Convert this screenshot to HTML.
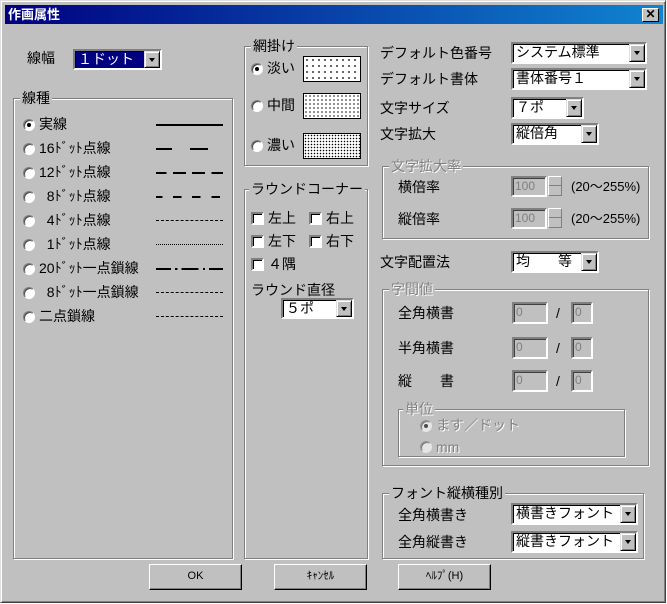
<!DOCTYPE html><html><head><meta charset="utf-8"><style>
*{box-sizing:border-box;margin:0;padding:0}
body{width:667px;height:604px;background:#fff;font-family:"Liberation Sans","Noto Sans CJK JP",sans-serif;font-size:14px;color:#000;position:relative;overflow:hidden}
.win{position:absolute;left:0;top:0;width:666px;height:603px;background:#c0c0c0;border:1px solid;border-color:#dfdfdf #404040 #404040 #dfdfdf;box-shadow:inset 1px 1px #fff,inset -1px -1px #808080}
.a{position:absolute;white-space:nowrap;line-height:18px}
.title{position:absolute;left:4px;top:4px;width:658px;height:19px;background:linear-gradient(90deg,#000080,#1084d0);color:#fff;font-weight:bold;font-size:13px;line-height:19px;padding-left:3px}
.xb{position:absolute;left:641px;top:7px;width:17px;height:14px;background:#c0c0c0;border:1px solid;border-color:#fff #000 #000 #fff;font-size:12px;line-height:11px;text-align:center;font-weight:bold;color:#000}
.g{position:absolute;border:1px solid #808080;box-shadow:1px 1px #fff,inset 1px 1px #fff}
.gl{position:absolute;top:-10px;left:6px;background:#c0c0c0;padding:0 2px;font-size:14px;line-height:18px}
.dis{color:#808080;text-shadow:1px 1px #fff}
.cb{position:absolute;background:#fff;border:2px solid;border-color:#808080 #fff #fff #808080;box-shadow:inset 1px 1px #000;padding-left:3px;line-height:17px;font-size:14px}
.cb .ar{position:absolute;right:0;top:0;width:16px;height:100%;background:#c0c0c0;border:1px solid;border-color:#dfdfdf #000 #000 #dfdfdf;box-shadow:inset 1px 1px #fff,inset -1px -1px #808080}
.cb .ar:after{content:"";position:absolute;left:4px;top:6px;border:3px solid transparent;border-top:4px solid #000;border-bottom:0}
.rd{position:absolute;width:12px;height:12px;border-radius:50%;background:#fff;border:1px solid;border-color:#808080 #fff #fff #808080;box-shadow:inset 1px 1px #404040}
.rd.on:after{content:"";position:absolute;left:3px;top:3px;width:4px;height:4px;border-radius:50%;background:#000}
.ck{position:absolute;width:13px;height:13px;background:#fff;border:2px solid;border-color:#808080 #fff #fff #808080;box-shadow:inset 1px 1px #000}
.ln{position:absolute;left:155px;width:67px;height:0;border-top:2px solid #000}
.pat{position:absolute;left:302px;width:58px;height:26px;border:1px solid #000;background:#fff}
.ed{position:absolute;background:#c0c0c0;border:2px solid;border-color:#808080 #fff #fff #808080;box-shadow:inset 1px 1px #404040;color:#808080;font-size:12px;line-height:16px;padding-left:2px}
.btn{position:absolute;top:563px;width:93px;height:26px;background:#c0c0c0;border:1px solid;border-color:#fff #000 #000 #fff;box-shadow:inset -1px -1px #808080;text-align:center;line-height:23px;font-size:11px}
.sp{position:absolute;width:14px;height:20px;background:#c0c0c0;border:1px solid;border-color:#fff #808080 #808080 #fff}
.sp:before{content:"";position:absolute;left:0;right:0;top:8px;border-top:1px solid #808080}
</style></head><body><div class="win">
<div class="title">作画属性</div><div class="xb">✕</div>

<div class="a" style="left:26px;top:48px">線幅</div>
<div class="cb" style="left:72px;top:48px;width:89px;height:21px;background:#000080;color:#fff">１ドット<span class="ar"></span></div>

<div class="g" style="left:12px;top:97px;width:220px;height:461px"><span class="gl">線種</span></div>
<div class="rd on" style="left:22px;top:118px"></div><div class="a" style="left:38px;top:114px">実線</div><div class="ln" style="top:123px"></div>
<div class="rd" style="left:22px;top:142px"></div><div class="a" style="left:38px;top:138px">16ﾄﾞｯﾄ点線</div><div class="ln" style="top:147px;border-top-style:dashed;border-image:repeating-linear-gradient(90deg,#000 0 17px,transparent 17px 34px) 2"></div>
<div class="rd" style="left:22px;top:166px"></div><div class="a" style="left:38px;top:162px">12ﾄﾞｯﾄ点線</div><div class="ln" style="top:171px;border-top-style:dashed;border-image:repeating-linear-gradient(90deg,#000 0 12px,transparent 12px 18px) 2"></div>
<div class="rd" style="left:22px;top:190px"></div><div class="a" style="left:38px;top:186px">&nbsp;&nbsp;8ﾄﾞｯﾄ点線</div><div class="ln" style="top:195px;border-top-style:dashed;border-image:repeating-linear-gradient(90deg,#000 0 8px,transparent 8px 18px) 2"></div>
<div class="rd" style="left:22px;top:214px"></div><div class="a" style="left:38px;top:210px">&nbsp;&nbsp;4ﾄﾞｯﾄ点線</div><div class="ln" style="top:219px;border-top:1px dashed #000"></div>
<div class="rd" style="left:22px;top:238px"></div><div class="a" style="left:38px;top:234px">&nbsp;&nbsp;1ﾄﾞｯﾄ点線</div><div class="ln" style="top:243px;border-top:1px dotted #000"></div>
<div class="rd" style="left:22px;top:262px"></div><div class="a" style="left:38px;top:258px">20ﾄﾞｯﾄ一点鎖線</div><div class="ln" style="top:267px;border-top-style:dashed;border-image:repeating-linear-gradient(90deg,#000 0 16px,transparent 16px 20px,#000 20px 22px,transparent 22px 26px) 2"></div>
<div class="rd" style="left:22px;top:286px"></div><div class="a" style="left:38px;top:282px">&nbsp;&nbsp;8ﾄﾞｯﾄ一点鎖線</div><div class="ln" style="top:291px;border-top:1px dashed #000"></div>
<div class="rd" style="left:22px;top:310px"></div><div class="a" style="left:38px;top:306px">二点鎖線</div><div class="ln" style="top:315px;border-top:1px dashed #000"></div>

<div class="g" style="left:243px;top:45px;width:124px;height:120px"><span class="gl">網掛け</span></div>
<div class="rd on" style="left:250px;top:62px"></div><div class="a" style="left:266px;top:58px">淡い</div>
<div class="pat" style="top:55px;background:radial-gradient(#000 0.7px,transparent 1px) 0 0/6px 6px #fff"></div>
<div class="rd" style="left:250px;top:99px"></div><div class="a" style="left:266px;top:95px">中間</div>
<div class="pat" style="top:92px;background:radial-gradient(#000 0.6px,transparent 0.9px) 0 0/4px 4px #fff"></div>
<div class="rd" style="left:250px;top:139px"></div><div class="a" style="left:266px;top:135px">濃い</div>
<div class="pat" style="top:132px;background:radial-gradient(#000 0.6px,transparent 0.9px) 0 0/3px 3px #fff"></div>

<div class="g" style="left:243px;top:188px;width:124px;height:370px"><span class="gl" style="left:4px">ラウンドコーナー</span></div>
<div class="ck" style="left:250px;top:211px"></div><div class="a" style="left:267px;top:208px">左上</div>
<div class="ck" style="left:308px;top:211px"></div><div class="a" style="left:325px;top:208px">右上</div>
<div class="ck" style="left:250px;top:234px"></div><div class="a" style="left:267px;top:231px">左下</div>
<div class="ck" style="left:308px;top:234px"></div><div class="a" style="left:325px;top:231px">右下</div>
<div class="ck" style="left:250px;top:257px"></div><div class="a" style="left:267px;top:254px">４隅</div>
<div class="a" style="left:250px;top:280px">ラウンド直径</div>
<div class="cb" style="left:280px;top:297px;width:73px;height:21px">５ポ<span class="ar"></span></div>

<div class="a" style="left:379px;top:43px">デフォルト色番号</div>
<div class="cb" style="left:510px;top:41px;width:136px;height:22px">システム標準<span class="ar"></span></div>
<div class="a" style="left:379px;top:69px">デフォルト書体</div>
<div class="cb" style="left:510px;top:67px;width:136px;height:22px">書体番号１<span class="ar"></span></div>
<div class="a" style="left:379px;top:98px">文字サイズ</div>
<div class="cb" style="left:510px;top:96px;width:73px;height:22px">７ポ<span class="ar"></span></div>
<div class="a" style="left:379px;top:124px">文字拡大</div>
<div class="cb" style="left:510px;top:122px;width:88px;height:22px">縦倍角<span class="ar"></span></div>

<div class="g" style="left:381px;top:165px;width:267px;height:73px"><span class="gl dis">文字拡大率</span></div>
<div class="a" style="left:397px;top:177px">横倍率</div>
<div class="ed" style="left:510px;top:175px;width:36px;height:21px">100</div><div class="sp" style="left:547px;top:175px"></div>
<div class="a" style="left:570px;top:177px;font-size:13px">(20～255%)</div>
<div class="a" style="left:397px;top:209px">縦倍率</div>
<div class="ed" style="left:510px;top:207px;width:36px;height:21px">100</div><div class="sp" style="left:547px;top:207px"></div>
<div class="a" style="left:570px;top:209px;font-size:13px">(20～255%)</div>

<div class="a" style="left:379px;top:252px">文字配置法</div>
<div class="cb" style="left:510px;top:250px;width:88px;height:22px">均　　等<span class="ar"></span></div>

<div class="g" style="left:381px;top:288px;width:267px;height:177px"><span class="gl dis">字間値</span></div>
<div class="a" style="left:397px;top:303px">全角横書</div>
<div class="ed" style="left:511px;top:301px;width:36px;height:22px">0</div><div class="a" style="left:555px;top:303px">/</div><div class="ed" style="left:570px;top:301px;width:22px;height:22px">0</div>
<div class="a" style="left:397px;top:338px">半角横書</div>
<div class="ed" style="left:511px;top:336px;width:36px;height:22px">0</div><div class="a" style="left:555px;top:338px">/</div><div class="ed" style="left:570px;top:336px;width:22px;height:22px">0</div>
<div class="a" style="left:397px;top:371px">縦　　書</div>
<div class="ed" style="left:511px;top:369px;width:36px;height:22px">0</div><div class="a" style="left:555px;top:371px">/</div><div class="ed" style="left:570px;top:369px;width:22px;height:22px">0</div>
<div class="g" style="left:397px;top:408px;width:227px;height:48px"><span class="gl dis" style="left:4px">単位</span></div>
<div class="rd on" style="left:419px;top:419px;opacity:.6"></div><div class="a dis" style="left:435px;top:415px">ます／ドット</div>
<div class="rd" style="left:419px;top:440px;opacity:.6"></div><div class="a dis" style="left:435px;top:437px">mm</div>

<div class="g" style="left:381px;top:492px;width:262px;height:66px"><span class="gl">フォント縦横種別</span></div>
<div class="a" style="left:397px;top:505px">全角横書き</div>
<div class="cb" style="left:510px;top:502px;width:127px;height:22px">横書きフォント<span class="ar"></span></div>
<div class="a" style="left:397px;top:532px">全角縦書き</div>
<div class="cb" style="left:510px;top:530px;width:127px;height:22px">縦書きフォント<span class="ar"></span></div>

<div class="btn" style="left:148px">OK</div>
<div class="btn" style="left:273px">ｷｬﾝｾﾙ</div>
<div class="btn" style="left:397px">ﾍﾙﾌﾟ(H)</div>
</div></body></html>
